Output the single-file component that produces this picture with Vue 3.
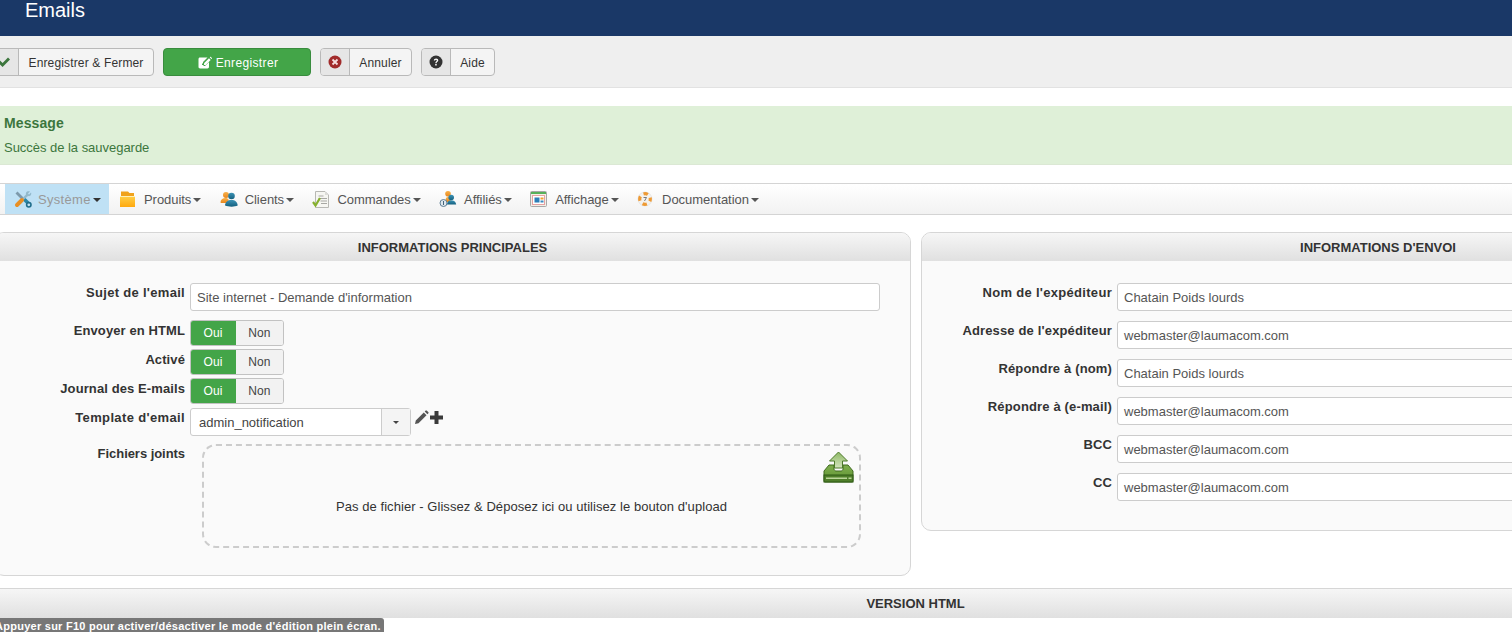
<script setup>
const menu = [
  { label: 'Système', icon: 'tools', active: true },
  { label: 'Produits', icon: 'box' },
  { label: 'Clients', icon: 'users' },
  { label: 'Commandes', icon: 'doc' },
  { label: 'Affiliés', icon: 'aff' },
  { label: 'Affichage', icon: 'win' },
  { label: 'Documentation', icon: 'help' }
]
const toggles = ['Envoyer en HTML', 'Activé', 'Journal des E-mails']
const sendRows = [
  { label: 'Nom de l\'expéditeur', value: 'Chatain Poids lourds', loose: true },
  { label: 'Adresse de l\'expéditeur', value: 'webmaster@laumacom.com' },
  { label: 'Répondre à (nom)', value: 'Chatain Poids lourds' },
  { label: 'Répondre à (e-mail)', value: 'webmaster@laumacom.com' },
  { label: 'BCC', value: 'webmaster@laumacom.com' },
  { label: 'CC', value: 'webmaster@laumacom.com' }
]
</script>

<template>
  <div class="page">
    <header class="top"><h1>Emails</h1></header>

    <div class="toolbar">
      <div class="btn first">
        <span class="ico">
          <svg width="14" height="14" viewBox="0 0 14 14"><path d="M1 7.500l2-2 2.600 2.600L11 2.600l2 2-7.400 7.400z" fill="#3c763d"/></svg>
        </span>
        <span class="lbl">Enregistrer &amp; Fermer</span>
      </div>
      <div class="save">
        <svg width="14" height="13" viewBox="0 0 14 13"><path d="M2 1.500h7.500L5 6v1.500H4V9h1.500v1H7l4-4v4.800c0 1-.7 1.700-1.600 1.700H2.100c-1 0-1.600-.7-1.600-1.700V3.100c0-1 .6-1.600 1.500-1.600z" fill="#fff"/><path d="M6 7.200L11 2.200l1.700 1.700L7.700 8.900H6z" fill="#fff"/><path d="M11.800 1.400l.4-.4c.2-.2.500-.2.700 0l1 1c.2.200.2.500 0 .7l-.4.400z" fill="#fff"/></svg>
        <span>Enregistrer</span>
      </div>
      <div class="btn cancel">
        <span class="ico">
          <svg width="14" height="14" viewBox="0 0 14 14"><circle cx="7" cy="7" r="6.500" fill="#a12b2b"/><path d="M4.500 4.500l5 5M9.500 4.500l-5 5" stroke="#f5dede" stroke-width="1.800"/></svg>
        </span>
        <span class="lbl">Annuler</span>
      </div>
      <div class="btn help">
        <span class="ico">
          <svg width="14" height="14" viewBox="0 0 14 14"><circle cx="7" cy="7" r="6.500" fill="#333"/><path d="M4.800 5.400c.1-1.300 1-2 2.300-2 1.300 0 2.200.8 2.200 1.900 0 1.600-1.700 1.500-1.700 2.900H6.300c0-2 1.500-1.900 1.500-2.800 0-.4-.3-.7-.8-.7s-.8.300-.9.900zM6.200 9h1.500v1.600H6.200z" fill="#fff"/></svg>
        </span>
        <span class="lbl">Aide</span>
      </div>
    </div>

    <div class="message">
      <h4>Message</h4>
      <p>Succès de la sauvegarde</p>
    </div>

    <nav class="menu">
      <div v-for="m in menu" :key="m.label" class="mi" :class="{ on: m.active }">
        <svg class="mico" width="18" height="18" viewBox="0 0 18 18">
          <defs>
            <linearGradient id="gBox" x1="0" y1="0" x2="0" y2="1"><stop offset="0" stop-color="#ffd04a"/><stop offset="1" stop-color="#ffa90f"/></linearGradient>
            <linearGradient id="gBlue" x1="0" y1="0" x2="0" y2="1"><stop offset="0" stop-color="#3d93b5"/><stop offset="1" stop-color="#14607f"/></linearGradient>
            <linearGradient id="gOr" x1="0" y1="0" x2="0" y2="1"><stop offset="0" stop-color="#f8b04a"/><stop offset="1" stop-color="#e8871d"/></linearGradient>
          </defs>
          <template v-if="m.icon === 'tools'">
            <path d="M1.500 3.500l2-2 7 7-2 2z" fill="#7d99ab"/>
            <path d="M9.500 8.500l5 5" stroke="#2a86a6" stroke-width="3.500"/>
            <circle cx="14.800" cy="14.800" r="2.200" fill="#bfe1f5" stroke="#1f6e8c" stroke-width="1.600"/>
            <path d="M13 1.500c1-.5 2-.5 3 0l-2 2 1 1 2-2c.5 1 .3 2.200-.5 3-.8.700-1.800.8-2.500.5L8.500 11 7 9.500l5-5c-.3-1-.1-2.200 1-3z" fill="#93b9cb"/>
            <path d="M8 10l-5 5" stroke="#e88f24" stroke-width="4" stroke-linecap="round"/>
          </template>
          <template v-else-if="m.icon === 'box'">
            <path d="M2 1.500h7l1.500 1.500H15V7H2z" fill="#f0a21c"/>
            <rect x="1" y="6" width="15" height="11" fill="url(#gBox)"/>
            <rect x="1" y="6" width="15" height="1" fill="#fff0b8"/>
          </template>
          <template v-else-if="m.icon === 'users'">
            <circle cx="6" cy="5" r="3" fill="url(#gOr)"/>
            <path d="M.5 12.500c0-3 2-4.500 5-4.500 1.500 0 2.500.5 3 1.500V13H1z" fill="url(#gOr)"/>
            <circle cx="11.500" cy="6" r="3.300" fill="url(#gBlue)"/>
            <path d="M5 15.500c.2-3.500 2.800-5.500 6.500-5.500s6 2 6.200 5.500c-3 1.500-9 1.500-12.700 0z" fill="url(#gBlue)"/>
          </template>
          <template v-else-if="m.icon === 'doc'">
            <path d="M3.500 1.500h9.500l3.500 3.500v12.500H3.500z" fill="#f6f6f2" stroke="#b8b8b4"/>
            <path d="M13 1.500V5h3.500z" fill="#dcdcd8"/>
            <path d="M6.500 6h5M6.500 8.500h8.500M8.500 11h6.500M9 13.500h6" stroke="#a8a8a4"/>
            <path d="M1 12l2.500 3.500L8 8" fill="none" stroke="#86b02e" stroke-width="2.200"/>
          </template>
          <template v-else-if="m.icon === 'aff'">
            <circle cx="9" cy="3.800" r="2.800" fill="url(#gOr)"/>
            <path d="M6.500 12c-.3-3 .5-5 2.500-5 1.500 0 2.500 1 3 3l-1 2z" fill="url(#gOr)"/>
            <circle cx="12.200" cy="7.500" r="2.800" fill="url(#gBlue)"/>
            <path d="M8 14.500c0-2.800 1.800-4.300 4.200-4.300s4.800 1.500 5 4.300z" fill="url(#gBlue)"/>
            <circle cx="4.500" cy="13" r="3.500" fill="#dfe8ee" stroke="#5f7f96"/>
            <path d="M4.500 11v4" stroke="#44657c"/>
          </template>
          <template v-else-if="m.icon === 'win'">
            <rect x="0.500" y="1.500" width="16" height="15" rx="1" fill="#f3efe6" stroke="#a8a8a8"/>
            <rect x="1" y="2" width="15" height="2" fill="#58b05a"/>
            <rect x="2.500" y="5.500" width="12" height="9" fill="#fff" stroke="#e6a3a3"/>
            <rect x="4.500" y="7.500" width="5" height="5" fill="#2d7fb8"/>
            <rect x="10.500" y="7.500" width="3" height="2" fill="#f0a030"/>
            <rect x="10.500" y="10.500" width="3" height="2" fill="#3a8ac0"/>
          </template>
          <template v-else>
            <circle cx="8" cy="9" r="7" fill="#f4f2ee" stroke="#dcdcdc" stroke-width=".6"/>
            <circle cx="8" cy="9" r="5.300" fill="none" stroke="#ee9a34" stroke-width="3.200" stroke-dasharray="4.500 3.830" stroke-dashoffset="2.200"/>
            <path d="M6.500 7.500h3L7.500 11" fill="none" stroke="#7a7a7a" stroke-width="1"/>
          </template>
        </svg>
        <span class="mtxt">{{ m.label }}</span><i class="caret"></i>
      </div>
    </nav>

    <div class="cols">
      <section class="panel left">
        <div class="phead">INFORMATIONS PRINCIPALES</div>
        <div class="pbody">
          <div class="row r-subject">
            <label class="loose">Sujet de l'email</label>
            <div class="input wide">Site internet - Demande d'information</div>
          </div>
          <div v-for="t in toggles" :key="t" class="row r-toggle">
            <label>{{ t }}</label>
            <div class="toggle"><span class="yes">Oui</span><span class="no">Non</span></div>
          </div>
          <div class="row r-template">
            <label class="looser">Template d'email</label>
            <div class="select">
              <span class="sval">admin_notification</span>
              <span class="sarrow"><i class="caret small"></i></span>
            </div>
            <svg class="pencil" width="15" height="15" viewBox="0 0 15 15"><path d="M1 14l.8-3.500L9.800 2.500l2.700 2.700-8 8zM10.700 1.600l1-1c.3-.3.700-.3 1 0l1.700 1.700c.3.3.3.700 0 1l-1 1z" fill="#555"/></svg>
            <svg class="plus" width="15" height="15" viewBox="0 0 15 15"><path d="M5.500 1h4v4.500H14v4H9.500V14h-4V9.500H1v-4h4.500z" fill="#3a3a3a"/></svg>
          </div>
          <div class="row r-files">
            <label class="tight">Fichiers joints</label>
            <div class="drop">
              <svg class="upload" width="31" height="32" viewBox="0 0 31 32">
                <defs>
                  <linearGradient id="gUp" x1="0" y1="0" x2="0" y2="1"><stop offset="0" stop-color="#7fae4e"/><stop offset="1" stop-color="#5d9230"/></linearGradient>
                  <linearGradient id="gArr" x1="0" y1="0" x2="0" y2="1"><stop offset="0" stop-color="#8db864"/><stop offset="1" stop-color="#d3e4bd"/></linearGradient>
                </defs>
                <path d="M6 14h5v4c0 1 1 2 2 2h5c1 0 2-1 2-2v-4h5l5 6v10a1 1 0 0 1-1 1H2a1 1 0 0 1-1-1V20z" fill="url(#gUp)" stroke="#3f6b1f"/>
                <rect x="1" y="24" width="29" height="7" fill="#4f7f2a" stroke="#2f5a14"/>
                <rect x="3" y="26.500" width="21" height="1.500" fill="#bcd79a"/>
                <rect x="25.500" y="26.500" width="3" height="1.500" fill="#bcd79a"/>
                <path d="M15.500 1l9 9h-5v7h-8v-7h-5z" fill="url(#gArr)" stroke="#4d7a2a"/>
              </svg>
              <span class="droptxt">Pas de fichier - Glissez &amp; Déposez ici ou utilisez le bouton d'upload</span>
            </div>
          </div>
        </div>
      </section>

      <section class="panel right">
        <div class="phead">INFORMATIONS D'ENVOI</div>
        <div class="pbody rb">
          <div v-for="r in sendRows" :key="r.label" class="row r-send">
            <label :class="{ loose: r.loose }">{{ r.label }}</label>
            <div class="input wide">{{ r.value }}</div>
          </div>
        </div>
      </section>
    </div>

    <div class="version">VERSION HTML</div>
    <div class="tip">Appuyer sur F10 pour activer/désactiver le mode d'édition plein écran.</div>
  </div>
</template>

<style scoped>
.page {
  position: relative;
  width: 1512px;
  height: 632px;
  overflow: hidden;
  background: #fff;
  font-family: "Liberation Sans", Arial, sans-serif;
  font-size: 13px;
  color: #333;
}
.top { height: 36px; background: #1a3867; padding-left: 25px; box-sizing: border-box; }
.top h1 { margin: 0; font-size: 20px; font-weight: 400; color: #fff; line-height: 20px; }

.toolbar {
  height: 52px; box-sizing: border-box; background: #efefef;
  border-bottom: 1px solid #e2e2e2;
  display: flex; align-items: flex-start; padding-top: 12px; margin-left: -11px;
  font-size: 12px; letter-spacing: .15px;
}
.btn {
  height: 28px; box-sizing: border-box; display: flex; background: #f4f4f4;
  border: 1px solid #b9b9b9; border-radius: 4px; overflow: hidden;
}
.ico {
  width: 29px; box-sizing: border-box; background: #e6e6e6; border-right: 1px solid #b9b9b9;
  display: flex; align-items: center; justify-content: center;
}
.lbl { flex: 1; display: flex; align-items: center; justify-content: center; padding-top: 1px; color: #333; }
.first { width: 165px; }
.save {
  width: 148px; height: 28px; box-sizing: border-box; margin-left: 9px; padding: 1px 0 0 2px;
  background: #43a548; border: 1px solid #398c3e; border-radius: 4px; color: #fff; letter-spacing: .35px;
  display: flex; align-items: center; justify-content: center; gap: 4px;
}
.cancel { width: 92px; margin-left: 9px; }
.help { width: 74px; margin-left: 9px; }

.message {
  margin-top: 18px; height: 59px; box-sizing: border-box; background: #dff0d8; color: #3c763d;
  padding: 9px 4px 0; border-bottom: 1px solid #dbe8d4;
}
.message h4 { margin: 0; font-size: 14px; line-height: 16px; font-weight: 700; letter-spacing: .1px; }
.message p { margin: 9px 0 0; font-size: 13px; line-height: 16px; letter-spacing: -.03px; }

.menu {
  margin-top: 18px; height: 32px; box-sizing: border-box; display: flex;
  border-top: 1px solid #d4d4d4; border-bottom: 1px solid #d4d4d4;
  background: linear-gradient(#fff, #f2f2f2); padding-left: 5px;
}
.mi { display: flex; align-items: center; padding: 0 8.4px 0 10px; color: #555; white-space: nowrap; letter-spacing: -.05px; }
.mi.on { background: #bfe1f5; width: 104px; box-sizing: border-box; padding: 0 0 0 9px; letter-spacing: .3px; }
.mi.on .mtxt { color: #999; }
.mi.on .mico { margin-right: 6px; }
.mi.on .caret { border-top-color: #333; }
.mico { margin-right: 7px; flex: none; }
.caret {
  display: inline-block; width: 0; height: 0; margin-left: 2px; margin-top: 2px;
  border-left: 4px solid transparent; border-right: 4px solid transparent; border-top: 4px solid #555;
}
.caret.small { margin: 0; border-left-width: 3px; border-right-width: 3px; border-top: 3px solid #444; }

.cols { display: flex; gap: 10px; margin-top: 17px; margin-left: -6px; width: 1900px; align-items: flex-start; }
.panel {
  box-sizing: border-box; background: #fafafa; border: 1px solid #d6d6d6; border-radius: 10px; overflow: hidden;
}
.left { width: 917px; height: 344px; flex: none; }
.right { width: 914px; height: 299px; flex: none; }
.phead {
  height: 28px; line-height: 29px; text-align: center; font-weight: 700; color: #333;
  background: linear-gradient(#f6f6f6, #e0e0e0);
}
.pbody { padding: 22px 0 0 5px; }
.row { display: flex; align-items: flex-start; }
.row label {
  width: 185px; text-align: right; font-weight: 700; color: #333; line-height: 14px; flex: none;
  margin-right: 5px; white-space: nowrap; padding-top: 3px; letter-spacing: .1px;
}
.row label.loose { letter-spacing: .3px; }
.row label.looser { letter-spacing: .36px; }
.row label.tight { letter-spacing: -.05px; }
.input {
  height: 28px; box-sizing: border-box; border: 1px solid #ccc; border-radius: 3px; background: #fff;
  padding: 0 6px; line-height: 28px; color: #555;
}
.r-subject .wide { width: 690px; }
.r-subject { height: 37px; }
.r-toggle { height: 29px; }
.r-toggle label { padding-top: 4px; }
.toggle { display: flex; width: 94px; height: 26px; box-sizing: border-box; border: 1px solid #c2c2c2; border-radius: 3px; overflow: hidden; font-size: 12px; letter-spacing: .1px; }
.yes { width: 46px; margin: -1px 0 -1px -1px; background: #43a548; color: #fff; text-align: center; line-height: 26px; }
.no { flex: 1; background: #f2f2f2; text-align: center; line-height: 24px; color: #444; }
.r-template { height: 37px; padding-top: 1px; box-sizing: border-box; }
.r-template label { padding-top: 3px; }
.select { display: flex; width: 221px; height: 28px; box-sizing: border-box; border: 1px solid #ccc; border-radius: 3px; background: #fff; }
.sval { flex: 1; padding-left: 8px; line-height: 28px; color: #444; }
.sarrow { width: 28px; border-left: 1px solid #ccc; background: #f4f4f4; display: flex; align-items: center; justify-content: center; }
.pencil { margin: 2px 0 0 3px; }
.plus { margin: 2px 0 0 0; }
.r-files label { padding-top: 3px; }
.drop {
  position: relative; width: 659px; height: 104px; box-sizing: border-box; margin-left: 12px;
  border: 2px dashed #ccc; border-radius: 14px; display: flex; align-items: center; justify-content: center;
}
.upload { position: absolute; top: 5px; right: 5px; }
.droptxt { margin-top: 20px; color: #333; letter-spacing: .06px; }
.rb { padding-left: 0; }
.r-send { height: 38px; }
.r-send label { width: 190px; letter-spacing: .15px; }
.r-send .wide { width: 690px; }
.version {
  margin-top: 12px; height: 30px; box-sizing: border-box; border-top: 1px solid #d6d6d6; text-align: center;
  font-weight: 700; line-height: 29px; background: linear-gradient(#f6f6f6, #e0e0e0);
  padding-left: 319px;
}
.tip {
  position: absolute; left: -5px; top: 618px; height: 16px; line-height: 16px; padding: 0 3px 0 0; background: #777;
  color: #fff; font-weight: 700; font-size: 11px; letter-spacing: .26px; border-radius: 3px 3px 0 0; white-space: nowrap;
}
</style>
